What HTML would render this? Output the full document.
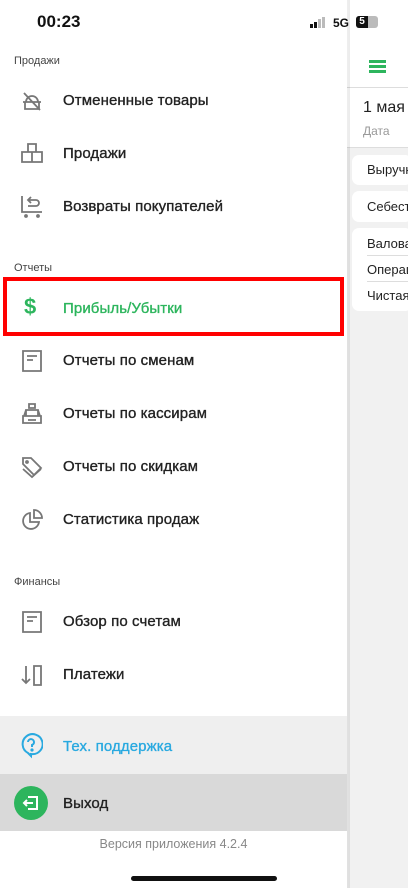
<!DOCTYPE html>
<html><head><meta charset="utf-8"><style>
*{margin:0;padding:0;box-sizing:border-box}
body{width:408px;height:888px;overflow:hidden;background:#fff;font-family:"Liberation Sans",sans-serif;position:relative;color:#222}
.abs{position:absolute}
.rp{left:347px;top:0;width:61px;height:888px;background:#f1f1f1;overflow:hidden}
.shadow{left:330px;top:0;width:20px;height:888px;background:linear-gradient(to right,rgba(0,0,0,0),rgba(0,0,0,0.08))}
.drawer{left:0;top:0;width:347px;height:888px;background:#fff}
.sec{left:14px;font-size:11px;color:#444}
.item{left:63px;font-size:15px;color:#222;-webkit-text-stroke:0.35px currentColor;letter-spacing:0.1px;white-space:nowrap}
.ic{left:20px;width:24px;height:24px}
.card{left:5px;width:60px;background:#fff;border-radius:7px}
.rt{left:20px;font-size:13px;color:#222;white-space:nowrap}
</style></head><body>
<div class="abs rp">
<div class="abs" style="left:0;top:0;width:61px;height:88px;background:#fff;border-bottom:1px solid #ddd"></div>
<div class="abs" style="left:22px;top:60px;width:17px;height:2.5px;background:#2db55d"></div>
<div class="abs" style="left:22px;top:65px;width:17px;height:2.5px;background:#2db55d"></div>
<div class="abs" style="left:22px;top:70px;width:17px;height:2.5px;background:#2db55d"></div>
<div class="abs" style="left:0;top:88px;width:61px;height:60px;background:#fff;border-bottom:1px solid #ddd"></div>
<div class="abs" style="left:16px;top:99px;font-size:16px;white-space:nowrap">1 мая</div>
<div class="abs" style="left:16px;top:124px;font-size:12px;color:#999">Дата</div>
<div class="abs card" style="top:155px;height:30px"></div>
<div class="abs rt" style="top:162px">Выручка</div>
<div class="abs card" style="top:191px;height:31px"></div>
<div class="abs rt" style="top:199px">Себестоимость</div>
<div class="abs card" style="top:228px;height:83px"></div>
<div class="abs rt" style="top:236px">Валовая</div>
<div class="abs" style="left:20px;top:255px;width:41px;height:1px;background:#ddd"></div>
<div class="abs rt" style="top:262px">Операционная</div>
<div class="abs" style="left:20px;top:281px;width:41px;height:1px;background:#ddd"></div>
<div class="abs rt" style="top:288px">Чистая</div>
</div>
<div class="abs shadow"></div>
<div class="abs drawer"></div>

<div class="abs" style="left:37px;top:12px;font-size:17px;font-weight:bold;color:#111">00:23</div>
<div class="abs" style="left:310px;top:17px;width:20px;height:12px">
<div class="abs" style="left:0;top:7px;width:3px;height:4px;background:#111"></div>
<div class="abs" style="left:4px;top:5px;width:3px;height:6px;background:#111"></div>
<div class="abs" style="left:8px;top:2px;width:3px;height:9px;background:#bbb"></div>
<div class="abs" style="left:12px;top:0;width:3px;height:11px;background:#bbb"></div></div>
<div class="abs" style="left:333px;top:16px;font-size:12px;font-weight:bold;color:#111">5G</div>
<div class="abs" style="left:356px;top:16px;width:22px;height:12px;background:#bbb;border-radius:3px;overflow:hidden"><div style="width:12px;height:12px;background:#111;color:#fff;font-size:10px;font-weight:bold;text-align:center;line-height:12px">5</div></div>

<div class="abs sec" style="top:55px">Продажи</div>
<svg class="abs ic" style="top:89px" viewBox="0 0 24 24" fill="none" stroke="#777" stroke-width="1.8"><path d="M3 13h18M5 13v7h14v-7M6 13a6 6 0 0 1 12 0M4 4l16 17"/></svg>
<div class="abs item" style="top:92px">Отмененные товары</div>
<svg class="abs ic" style="top:142px" viewBox="0 0 24 24" fill="none" stroke="#777" stroke-width="1.8"><path d="M8 2h8v8H8zM2 10h10v10H2zM12 10h10v10H12z"/></svg>
<div class="abs item" style="top:145px">Продажи</div>
<svg class="abs ic" style="top:194px" viewBox="0 0 24 24" fill="none" stroke="#777" stroke-width="1.8"><path d="M2 2v16h20M8 12h8a3 3 0 0 0 0-6H9M11 3L8 6l3 3"/><circle cx="6" cy="22" r="1" fill="#777"/><circle cx="18" cy="22" r="1" fill="#777"/></svg>
<div class="abs item" style="top:198px">Возвраты покупателей</div>

<div class="abs sec" style="top:262px">Отчеты</div>
<div class="abs" style="left:3px;top:277px;width:341px;height:59px;border:4px solid #f00"></div>
<div class="abs" style="left:24px;top:294px;font-size:22px;font-weight:bold;color:#2db55d">$</div>
<div class="abs item" style="top:300px;color:#2db55d">Прибыль/Убытки</div>
<svg class="abs ic" style="top:349px" viewBox="0 0 24 24" fill="none" stroke="#777" stroke-width="1.8"><path d="M3 2h18v20H3zM7 7h10M7 11h6"/></svg>
<div class="abs item" style="top:352px">Отчеты по сменам</div>
<svg class="abs ic" style="top:402px" viewBox="0 0 24 24" fill="none" stroke="#777" stroke-width="1.8"><path d="M9 2h6v4H9zM6 8h12v6H6zM3 14h18v7H3zM4 14l2-6M20 14l-2-6M8 18h8"/></svg>
<div class="abs item" style="top:405px">Отчеты по кассирам</div>
<svg class="abs ic" style="top:455px" viewBox="0 0 24 24" fill="none" stroke="#777" stroke-width="1.8"><path d="M3 3h8l10 10-7 7L3 9zM3 14l9 8 9-8"/><circle cx="7" cy="7" r="1"/></svg>
<div class="abs item" style="top:458px">Отчеты по скидкам</div>
<svg class="abs ic" style="top:508px" viewBox="0 0 24 24" fill="none" stroke="#777" stroke-width="1.8"><path d="M10 5a8 8 0 1 0 9 9h-9zM14 2v8h8a8 8 0 0 0-8-8z"/></svg>
<div class="abs item" style="top:511px">Статистика продаж</div>

<div class="abs sec" style="top:576px">Финансы</div>
<svg class="abs ic" style="top:610px" viewBox="0 0 24 24" fill="none" stroke="#777" stroke-width="1.8"><path d="M3 2h18v20H3zM7 7h10M7 11h6"/></svg>
<div class="abs item" style="top:613px">Обзор по счетам</div>
<svg class="abs ic" style="top:663px" viewBox="0 0 24 24" fill="none" stroke="#777" stroke-width="1.8"><path d="M6 3v17M2 16l4 4 4-4M14 3h7v19h-7z"/></svg>
<div class="abs item" style="top:666px">Платежи</div>

<div class="abs" style="left:0;top:716px;width:347px;height:58px;background:#efefef"></div>
<svg class="abs" style="left:19px;top:733px;width:24px;height:26px" viewBox="0 0 24 26" fill="none" stroke="#29a9e0" stroke-width="2"><path d="M12 23l-3-3a10 10 0 1 1 3 1z"/><path d="M9 9a3 3 0 1 1 4 3v2"/><circle cx="13" cy="17" r=".6" fill="#29a9e0"/></svg>
<div class="abs item" style="top:738px;color:#29a9e0">Тех. поддержка</div>
<div class="abs" style="left:0;top:774px;width:347px;height:57px;background:#d9d9d9"></div>
<div class="abs" style="left:14px;top:786px;width:34px;height:34px;border-radius:50%;background:#2db55d"></div>
<svg class="abs" style="left:21px;top:793px;width:20px;height:20px" viewBox="0 0 20 20" fill="none" stroke="#fff" stroke-width="2"><path d="M7 4h9v12H7M12 10H3M6 7l-3 3 3 3"/></svg>
<div class="abs item" style="top:795px">Выход</div>
<div class="abs" style="left:0;top:837px;width:347px;text-align:center;font-size:12.5px;color:#888">Версия приложения 4.2.4</div>
<div class="abs" style="left:131px;top:876px;width:146px;height:5px;border-radius:3px;background:#111"></div>
</body></html>
